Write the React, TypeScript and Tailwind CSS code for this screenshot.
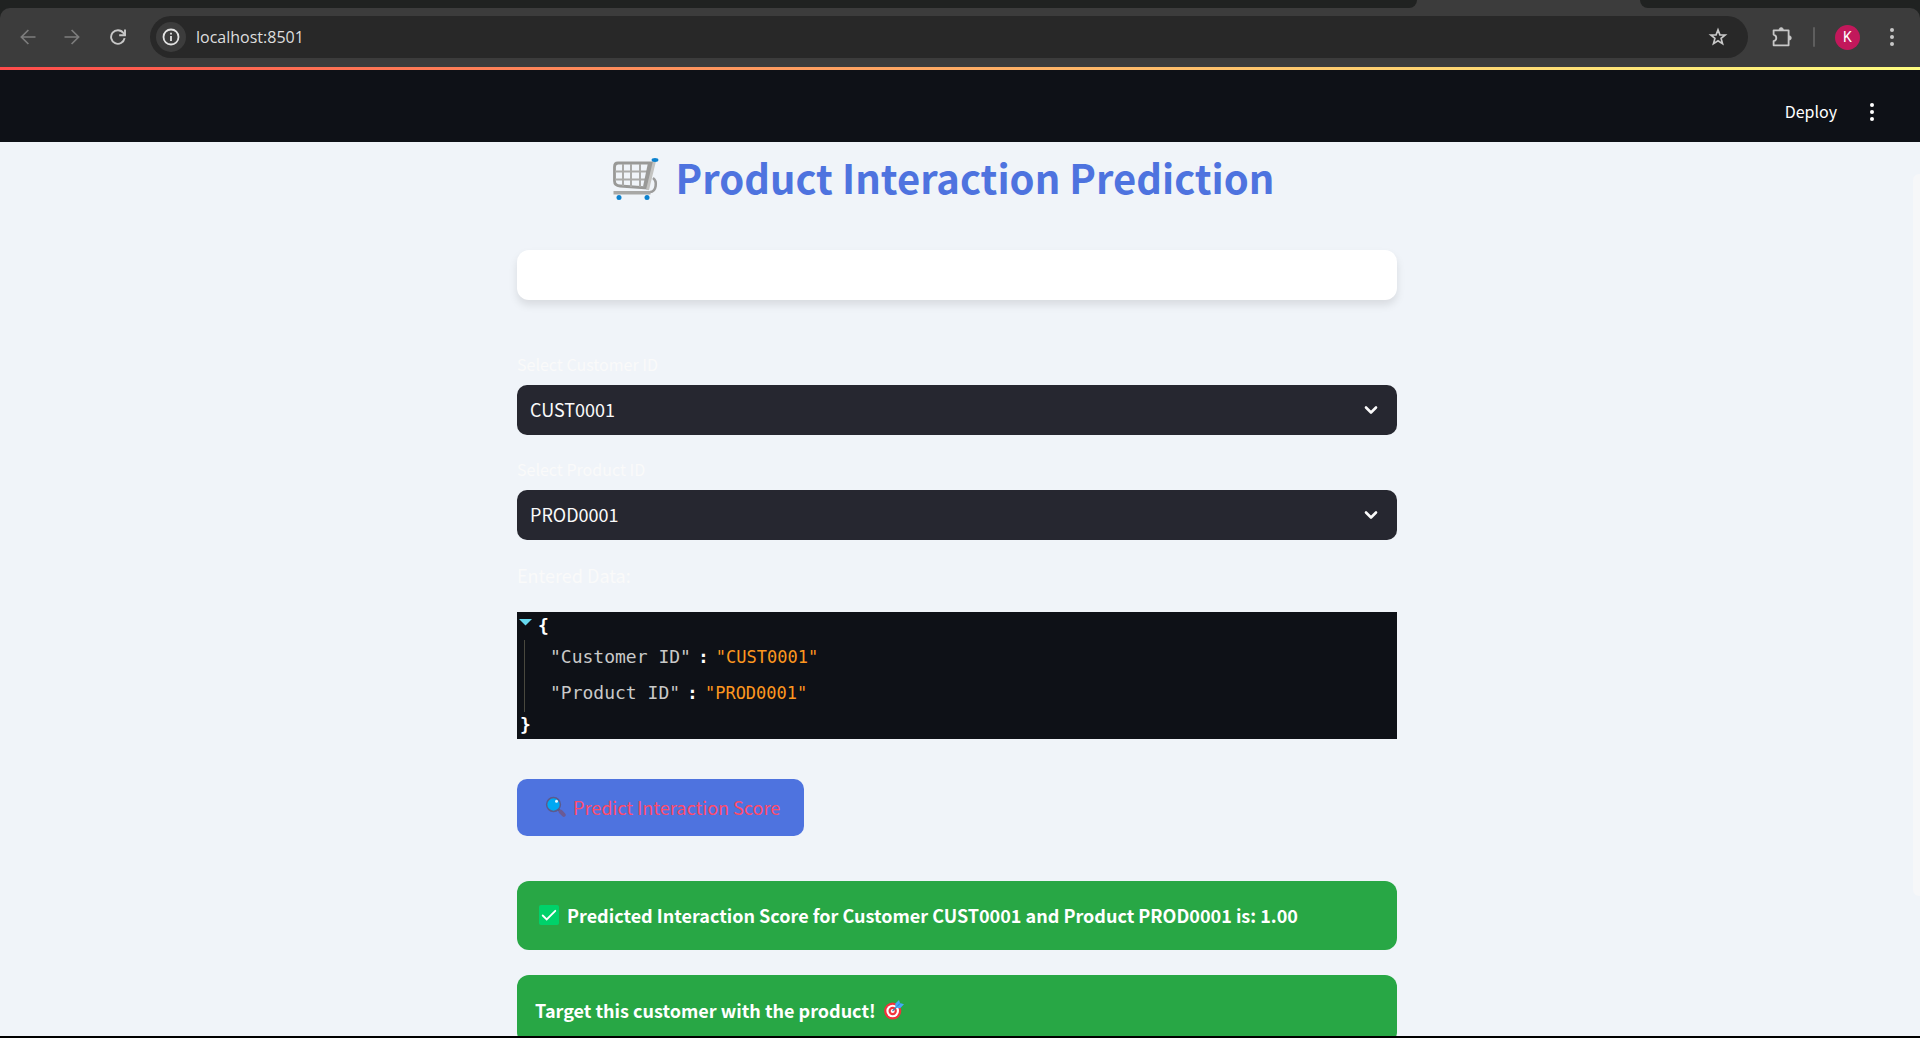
import React from "react";

const sans = "font-['Noto_Sans_CJK_SC',sans-serif]";
const mono = "font-['DejaVu_Sans_Mono',monospace]";

function BackIcon({ flip = false }: { flip?: boolean }) {
  return (
    <svg viewBox="0 0 16 16" className={flip ? "size-4 rotate-180" : "size-4"} fill="none" stroke="currentColor" strokeWidth="1.7">
      <path d="M15.5 8H1.6M8.4 1 1.4 8l7 7" />
    </svg>
  );
}

function ReloadIcon() {
  return (
    <svg viewBox="0 0 16 16" className="size-4" fill="none" stroke="currentColor" strokeWidth="1.9">
      <path d="M14.6 9.2A6.8 6.8 0 1 1 13.4 4L15 6" />
      <path d="M15 .4V6.3H9.2" />
    </svg>
  );
}

function InfoIcon() {
  return (
    <svg viewBox="0 0 18 18" className="size-[18px]" fill="none" stroke="currentColor" strokeWidth="1.8">
      <circle cx="9" cy="9" r="7.5" />
      <path d="M9 8v5M9 4.8v1.8" />
    </svg>
  );
}

function StarIcon() {
  return (
    <svg viewBox="0 0 20 20" className="size-5" fill="none" stroke="currentColor" strokeWidth="1.7">
      <path d="m10 2.8 1.9 5 5.3.2-4.1 3.4 1.4 5.2-4.5-2.9-4.5 2.9 1.4-5.2L2.8 8l5.3-.2z" />
    </svg>
  );
}

function PuzzleIcon() {
  return (
    <svg viewBox="0 0 22 22" className="size-[22px]" fill="none" stroke="currentColor" strokeWidth="1.8" strokeLinejoin="round">
      <path d="M2.6 4.3h15v15h-15v-4.2c3.6-1 3.6-5.4 0-6.5z" />
      <path d="M8 4a2.2 2.6 0 0 1 4.4 0zM18 9.7a2.4 2.2 0 0 1 0 4.4z" fill="currentColor" strokeWidth=".6" />
    </svg>
  );
}

function DotsIcon() {
  return (
    <svg viewBox="0 0 6 20" className="h-5 w-1.5" fill="currentColor">
      <circle cx="3" cy="3" r="2" />
      <circle cx="3" cy="10" r="2" />
      <circle cx="3" cy="17" r="2" />
    </svg>
  );
}

function CartIcon() {
  return (
    <svg viewBox="0 -3 48 48" className="size-12 shrink-0" fill="none">
      <path d="M41 22c4.500 3 3.500 14-3 14" stroke="#9b9b9b" strokeWidth="2.600" />
      <path d="M1.500 36.800h37" stroke="#a8a8a6" strokeWidth="3.600" />
      <path d="M6 7h34l-5 25-27-2c-3.500-.3-5.500-2-5.500-5V11c0-2.500 1-4 3.500-4z" stroke="#999997" strokeWidth="2.800" />
      <path d="M11 8v22M19 8v23M28 8v23M3 15.500h35M3 23.500h33" stroke="#aaaaa8" strokeWidth="2" />
      <path d="M38 7 33 31" stroke="#999997" strokeWidth="4" />
      <path d="M42.500 5 35.500 34" stroke="#c3c3c1" strokeWidth="3" />
      <ellipse cx="43" cy="4" rx="3.400" ry="1.900" fill="#0c82cf" />
      <circle cx="7" cy="41.500" r="2.500" fill="#0c82cf" />
      <circle cx="35" cy="41.500" r="2.500" fill="#0c82cf" />
    </svg>
  );
}

function MagnifierIcon() {
  return (
    <svg viewBox="0 0 22 22" className="size-[22px] shrink-0" fill="none">
      <path d="m13.500 13.500 2.500 2.500" stroke="#585a72" strokeWidth="2" />
      <path d="m15.500 15.500 3.300 3.300" stroke="#6b5a95" strokeWidth="4" strokeLinecap="round" />
      <circle cx="8.500" cy="8.500" r="6.900" fill="#00a8f3" stroke="#5c5a8c" strokeWidth="1.500" />
      <circle cx="11.500" cy="5.300" r="1.500" fill="#e8f8ff" />
    </svg>
  );
}

function CheckIcon() {
  return (
    <svg viewBox="0 0 20 20" className="size-5 shrink-0" fill="none">
      <rect width="20" height="20" rx="2" fill="#00d26a" />
      <path d="m3.700 10.500 4 4 8.600-8.700" stroke="#fff" strokeWidth="1.800" strokeLinecap="round" />
    </svg>
  );
}

function TargetIcon() {
  return (
    <svg viewBox="0 0 20 20" className="size-5 shrink-0" fill="none">
      <circle cx="8.700" cy="11" r="8.600" fill="#f3323c" />
      <circle cx="8.700" cy="11" r="6.300" fill="#fff" />
      <circle cx="8.700" cy="11" r="4.200" fill="#f3323c" />
      <circle cx="8.700" cy="11" r="2" fill="#fff" />
      <path d="m8.500 11 5-5" stroke="#3a7fb5" strokeWidth="1.300" />
      <path d="m11.500 7.500-.3-3.800L15 0l1 3 4 1.300-3.900 4z" fill="#45a9f5" />
      <path d="m13 6.500 3-3" stroke="#2377c4" />
    </svg>
  );
}

function SelectField({ id, label, value }: { id: string; label: string; value: string }) {
  return (
    <div>
      <label htmlFor={id} className="mb-[9px] block text-base leading-6 text-[#fafafa]">
        {label}
      </label>
      <div className="relative">
        <select
          id={id}
          defaultValue={value}
          className="block h-[50px] w-full appearance-none rounded-[10px] bg-[#262730] px-[13px] pb-0.5 text-lg text-[#fafafa] outline-none"
        >
          <option>{value}</option>
        </select>
        <svg viewBox="0 0 14 10" className="pointer-events-none absolute top-5 right-[19px] h-[10px] w-[14px]" fill="none" stroke="#fafafa" strokeWidth="2.6" strokeLinecap="round" strokeLinejoin="round">
          <path d="m2 2.500 5 5 5-5" />
        </svg>
      </div>
    </div>
  );
}

function JsonRow({ name, value }: { name: string; value: string }) {
  return (
    <div className="flex h-9 items-center pb-0.5 pl-[25px]">
      <span className="text-lg text-[#c9c9c9]">"{name}"</span>
      <span className="px-[7px] font-bold text-white">:</span>
      <span className="text-[17px] text-[#fd971f]">"{value}"</span>
    </div>
  );
}

export default function App() {
  return (
    <div className={`flex h-screen flex-col overflow-hidden bg-black pb-0.5 ${sans}`}>
      <div className="flex h-2 shrink-0 bg-[#3c3c3c]">
        <div className="w-[1417px] rounded-br-xl bg-[#202221]" />
        <div className="ml-[223px] flex-1 rounded-bl-xl bg-[#202221]" />
      </div>
      <nav aria-label="Browser toolbar" className="shrink-0 bg-[#202221]">
        <div className="flex h-[59px] items-center rounded-t-[10px] bg-[#3c3c3c] pr-[25px] pb-px pl-5 text-[#c7c7c7]">
          <button aria-label="Back" className="mr-7 text-[#7d7d7d]"><BackIcon /></button>
          <button aria-label="Forward" className="mr-[30px] text-[#7d7d7d]"><BackIcon flip /></button>
          <button aria-label="Reload" className="mr-6"><ReloadIcon /></button>
          <div className="flex h-[42px] flex-1 items-center rounded-full bg-[#282828] pr-5 pl-1.5">
            <button aria-label="Site information" className="flex size-[30px] items-center justify-center rounded-full bg-[#3c3c3c] text-[#e3e3e3]"><InfoIcon /></button>
            <input
              aria-label="Address"
              defaultValue="localhost:8501"
              className="ml-2.5 min-w-0 flex-1 bg-transparent font-['Open_Sans',sans-serif] text-base text-[#dedede] outline-none"
            />
            <button aria-label="Bookmark"><StarIcon /></button>
          </div>
          <button aria-label="Extensions" className="ml-[23px]"><PuzzleIcon /></button>
          <span className="ml-5 h-5 w-0.5 rounded bg-[#5e5e5e]" />
          <button aria-label="Profile" className="ml-5 flex size-[25px] items-center justify-center rounded-full bg-[#c2185b] font-['Roboto',sans-serif] text-sm text-white">K</button>
          <button aria-label="Browser menu" className="ml-[29px]"><DotsIcon /></button>
        </div>
      </nav>

      <div className="h-[3px] shrink-0 bg-linear-to-r from-[#ff4b4b] to-[#fffd80]" />
      <header className="flex h-[72px] shrink-0 items-center justify-end bg-[#0e1117] pt-3 pr-[45px] text-white">
        <button className="pb-0.5 text-base">Deploy</button>
        <button aria-label="Main menu" className="ml-8"><DotsIcon /></button>
      </header>

      <main className="relative min-h-0 flex-1 overflow-hidden bg-[#f0f4f9] pr-1.5">
        <div className="mx-auto w-full max-w-[880px]">
          <h1 className="flex items-center justify-center gap-4 pt-2.5 pr-7 text-[40px] leading-[50px] font-bold whitespace-nowrap text-[#4e73df]">
            <CartIcon />
            Product Interaction Prediction
          </h1>

          <div className="mt-12 h-[50px] rounded-xl bg-white shadow-[0_5px_8px_rgba(0,0,0,0.1)]" />

          <form className="mt-[52px] flex flex-col gap-[22px]">
            <SelectField id="customer" label="Select Customer ID" value="CUST0001" />
            <SelectField id="product" label="Select Product ID" value="PROD0001" />
          </form>

          <p className="mt-[19px] mb-[21px] text-lg leading-8 text-[#fafafa]">Entered Data:</p>

          <div className={`bg-[#0e1117] text-lg ${mono}`}>
            <div className="flex h-7 items-center text-white">
              <button aria-label="Collapse" className="-mt-2 mr-1.5 ml-0.5">
                <svg viewBox="0 0 13 8" className="h-2 w-[13px]"><path d="M0 1h13L6.500 7.500z" fill="#66d9ef" /></svg>
              </button>
              <span className="font-bold">{"{"}</span>
            </div>
            <div className="ml-[7px] border-l border-[#49483e]">
              <JsonRow name="Customer ID" value="CUST0001" />
              <JsonRow name="Product ID" value="PROD0001" />
            </div>
            <div className="flex h-[27px] items-center pb-0.5 pl-[3px] font-bold text-white">{"}"}</div>
          </div>

          <button className="mt-10 flex h-[57px] items-center gap-1.5 rounded-[10px] bg-[#4e73df] pr-6 pb-0.5 pl-7 text-lg text-[#ff4b6b]">
            <MagnifierIcon />
            Predict Interaction Score
          </button>

          <div className="mt-[45px] flex h-[69px] items-center gap-2 rounded-xl bg-[#28a745] px-[22px] pb-0.5 text-lg font-bold text-white">
            <CheckIcon />
            Predicted Interaction Score for Customer CUST0001 and Product PROD0001 is: 1.00
          </div>
          <div className="mt-[25px] flex h-[69px] items-center gap-2 rounded-xl bg-[#28a745] px-[18px] text-lg font-bold text-white">
            Target this customer with the product!
            <TargetIcon />
          </div>
        </div>
        <div className="absolute top-8 right-0 h-[722px] w-[7px] rounded-l-md bg-[#f6f7f9]" />
      </main>
    </div>
  );
}
